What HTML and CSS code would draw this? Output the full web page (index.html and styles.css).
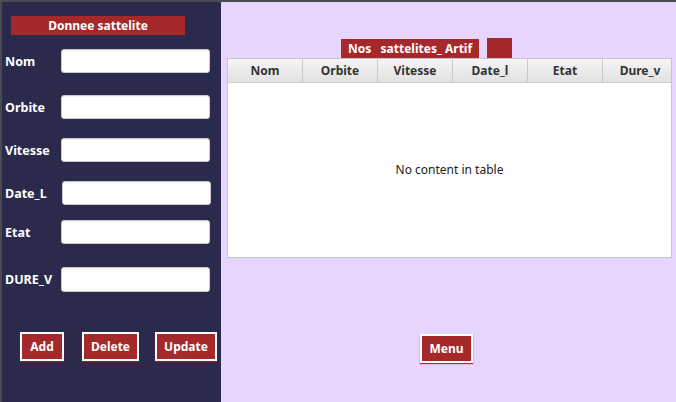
FILE: index.html
```html
<!DOCTYPE html>
<html>
<head>
<meta charset="utf-8">
<link rel="stylesheet" href="styles.css">
</head>
<body>
<div class="window">
  <aside class="side">
    <div class="title">Donnee sattelite</div>
    <div class="row r1"><span class="lbl">Nom</span><input class="field" type="text"></div>
    <div class="row r2"><span class="lbl">Orbite</span><input class="field" type="text"></div>
    <div class="row r3"><span class="lbl">Vitesse</span><input class="field" type="text"></div>
    <div class="row r4"><span class="lbl">Date_L</span><input class="field shifted" type="text"></div>
    <div class="row r5"><span class="lbl">Etat</span><input class="field" type="text"></div>
    <div class="row r6"><span class="lbl">DURE_V</span><input class="field" type="text"></div>
    <div class="actions">
      <button class="btn b-add">Add</button>
      <button class="btn b-del">Delete</button>
      <button class="btn b-upd">Update</button>
    </div>
  </aside>
  <main class="main">
    <div class="heading">
      <div class="tag">Nos&nbsp;&nbsp; sattelites_ Artif</div>
      <div class="square"></div>
    </div>
    <div class="table">
      <div class="thead">
        <div class="th">Nom</div>
        <div class="th">Orbite</div>
        <div class="th">Vitesse</div>
        <div class="th">Date_l</div>
        <div class="th">Etat</div>
        <div class="th">Dure_v</div>
      </div>
      <div class="tbody">No content in table</div>
    </div>
    <div class="menu-row"><button class="btn b-menu">Menu</button></div>
  </main>
</div>
</body>
</html>
```
FILE: styles.css
```css
* { box-sizing: border-box; }
html, body { margin: 0; padding: 0; }
body {
  width: 676px;
  height: 402px;
  overflow: hidden;
  font-family: "Noto Sans", "Open Sans", sans-serif;
  background: #4b4b4d;
}
.window {
  display: flex;
  height: 402px;
  padding: 2px 0 0 2px;
}
.side {
  width: 219px;
  flex: none;
  background: #2b2a4c;
  display: flex;
  flex-direction: column;
  padding: 14px 0 0 0;
}
.title {
  margin-left: 9px;
  width: 174px;
  height: 19px;
  background: #a5292b;
  color: #fff;
  font-weight: bold;
  font-size: 12px;
  line-height: 19px;
  text-align: center;
}
.row {
  display: flex;
  align-items: center;
  height: 24px;
}
.r1 { margin-top: 14px; }
.r2 { margin-top: 22px; }
.r3 { margin-top: 19px; }
.r4 { margin-top: 19px; }
.r5 { margin-top: 15px; }
.r6 { margin-top: 23px; height: 25px; }
.lbl {
  width: 59px;
  padding-left: 3px;
  color: #fff;
  font-weight: bold;
  font-size: 12.5px;
  flex: none;
}
.field {
  width: 149px;
  height: 100%;
  border: 1px solid #c9c9cf;
  border-radius: 3px;
  background: #fff;
  box-shadow: inset 0 1px 1px rgba(0,0,0,0.06);
  outline: none;
  margin: 0;
  padding: 0;
}
.shifted { margin-left: 1px; }
.actions {
  display: flex;
  margin-top: 40px;
  padding-left: 18px;
}
.btn {
  height: 29px;
  margin: 0;
  padding: 0;
  border: 2px solid #fff;
  background: #a5292b;
  color: #fff;
  font-family: "Noto Sans", "Open Sans", sans-serif;
  font-weight: bold;
  font-size: 12px;
  box-shadow: 0 1px 1px rgba(170, 20, 30, 0.9);
  cursor: pointer;
}
.b-add { width: 44px; }
.b-del { width: 57px; margin-left: 18px; }
.b-upd { width: 62px; margin-left: 16px; }
.main {
  flex: 1;
  background: #e6d6ff;
  padding: 35px 5px 0 6px;
  display: flex;
  flex-direction: column;
}
.heading {
  display: flex;
  align-items: flex-end;
  margin-left: 114px;
  height: 21px;
}
.tag {
  width: 138px;
  height: 19px;
  background: #a5292b;
  color: #fff;
  font-weight: bold;
  font-size: 12px;
  line-height: 19px;
  text-align: center;
  white-space: nowrap;
}
.square {
  width: 25px;
  height: 20px;
  margin-left: 8px;
  background: #a5292b;
}
.table {
  width: 445px;
  height: 200px;
  border: 1px solid #c6c6c8;
  background: #fff;
  display: flex;
  flex-direction: column;
  overflow: hidden;
}
.thead {
  display: flex;
  height: 24px;
  flex: none;
  border-bottom: 1px solid #cfcfcf;
  background: linear-gradient(#f5f5f5, #e1e1e1);
}
.th {
  width: 75px;
  flex: none;
  border-right: 1px solid #cacaca;
  font-size: 12px;
  font-weight: bold;
  color: #333;
  text-align: center;
  line-height: 23px;
}
.tbody {
  flex: 1;
  display: flex;
  align-items: center;
  justify-content: center;
  font-size: 12px;
  color: #222;
  padding-bottom: 2px;
}
.menu-row {
  display: flex;
  margin-top: 76px;
  padding-left: 193px;
}
.b-menu { width: 53px; }
```
